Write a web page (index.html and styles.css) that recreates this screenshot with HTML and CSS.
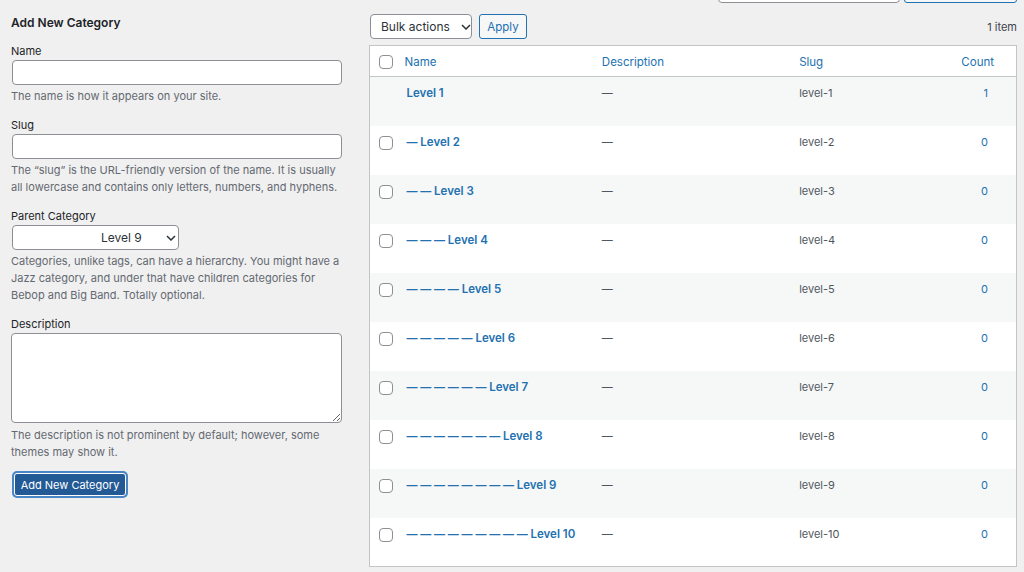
FILE: index.html
```html
<!DOCTYPE html>
<html lang="en">
<head>
    <meta charset="UTF-8">
    <meta name="viewport" content="width=device-width, initial-scale=1.0">
    <title>Categories</title>
    <link rel="stylesheet" href="styles.css">
</head>
<body>
    <div class="wrap">
        <!-- Left column: add form -->
        <div class="col-left">
            <h2>Add New Category</h2>

            <div class="field">
                <label for="tag-name">Name</label>
                <input type="text" id="tag-name" class="text-input">
                <p class="hint">The name is how it appears on your site.</p>
            </div>

            <div class="field">
                <label for="tag-slug">Slug</label>
                <input type="text" id="tag-slug" class="text-input">
                <p class="hint">The “slug” is the URL-friendly version of the name. It is usually all lowercase and contains only letters, numbers, and hyphens.</p>
            </div>

            <div class="field">
                <label>Parent Category</label>
                <div class="fake-select parent-select">
                    <span>Level 9</span>
                    <svg class="chevron" width="10" height="6" viewBox="0 0 10 6"><path d="M1 1l4 4 4-4" fill="none" stroke="#2c3338" stroke-width="1.5"/></svg>
                </div>
                <p class="hint">Categories, unlike tags, can have a hierarchy. You might have a Jazz category, and under that have children categories for Bebop and Big Band. Totally optional.</p>
            </div>

            <div class="field">
                <label for="tag-description">Description</label>
                <textarea id="tag-description" class="text-area"></textarea>
                <p class="hint">The description is not prominent by default; however, some themes may show it.</p>
            </div>

            <button class="btn-primary">Add New Category</button>
        </div>

        <!-- Right column: list table -->
        <div class="col-right">
            <div class="search-box">
                <div class="search-input"></div>
                <div class="search-btn"></div>
            </div>

            <div class="tablenav">
                <div class="fake-select bulk-select">
                    <span>Bulk actions</span>
                    <svg class="chevron" width="10" height="6" viewBox="0 0 10 6"><path d="M1 1l4 4 4-4" fill="none" stroke="#2c3338" stroke-width="1.5"/></svg>
                </div>
                <button class="btn-secondary">Apply</button>
                <span class="num-items">1 item</span>
            </div>

            <table class="list-table">
                <colgroup>
                    <col class="c-check">
                    <col class="c-name">
                    <col class="c-desc">
                    <col class="c-slug">
                    <col class="c-count">
                </colgroup>
                <thead>
                    <tr>
                        <th class="check"><span class="cb"></span></th>
                        <th>Name</th>
                        <th>Description</th>
                        <th>Slug</th>
                        <th class="count">Count</th>
                    </tr>
                </thead>
                <tbody>
                    <tr>
                        <td class="check"></td>
                        <td class="name">Level 1</td>
                        <td class="desc">—</td>
                        <td class="slug">level-1</td>
                        <td class="count">1</td>
                    </tr>
                    <tr>
                        <td class="check"><span class="cb"></span></td>
                        <td class="name"><span class="dash">— </span>Level 2</td>
                        <td class="desc">—</td>
                        <td class="slug">level-2</td>
                        <td class="count">0</td>
                    </tr>
                    <tr>
                        <td class="check"><span class="cb"></span></td>
                        <td class="name"><span class="dash">— — </span>Level 3</td>
                        <td class="desc">—</td>
                        <td class="slug">level-3</td>
                        <td class="count">0</td>
                    </tr>
                    <tr>
                        <td class="check"><span class="cb"></span></td>
                        <td class="name"><span class="dash">— — — </span>Level 4</td>
                        <td class="desc">—</td>
                        <td class="slug">level-4</td>
                        <td class="count">0</td>
                    </tr>
                    <tr>
                        <td class="check"><span class="cb"></span></td>
                        <td class="name"><span class="dash">— — — — </span>Level 5</td>
                        <td class="desc">—</td>
                        <td class="slug">level-5</td>
                        <td class="count">0</td>
                    </tr>
                    <tr>
                        <td class="check"><span class="cb"></span></td>
                        <td class="name"><span class="dash">— — — — — </span>Level 6</td>
                        <td class="desc">—</td>
                        <td class="slug">level-6</td>
                        <td class="count">0</td>
                    </tr>
                    <tr>
                        <td class="check"><span class="cb"></span></td>
                        <td class="name"><span class="dash">— — — — — — </span>Level 7</td>
                        <td class="desc">—</td>
                        <td class="slug">level-7</td>
                        <td class="count">0</td>
                    </tr>
                    <tr>
                        <td class="check"><span class="cb"></span></td>
                        <td class="name"><span class="dash">— — — — — — — </span>Level 8</td>
                        <td class="desc">—</td>
                        <td class="slug">level-8</td>
                        <td class="count">0</td>
                    </tr>
                    <tr>
                        <td class="check"><span class="cb"></span></td>
                        <td class="name"><span class="dash">— — — — — — — — </span>Level 9</td>
                        <td class="desc">—</td>
                        <td class="slug">level-9</td>
                        <td class="count">0</td>
                    </tr>
                    <tr>
                        <td class="check"><span class="cb"></span></td>
                        <td class="name"><span class="dash">— — — — — — — — — </span>Level 10</td>
                        <td class="desc">—</td>
                        <td class="slug">level-10</td>
                        <td class="count">0</td>
                    </tr>
                </tbody>
            </table>
        </div>
    </div>
</body>
</html>
```

FILE: styles.css
```css
body {
    margin: 0;
    background-color: #f0f0f1;
    font-family: Inter, "Liberation Sans", sans-serif;
    font-size: 11px;
    color: #3c434a;
    overflow: hidden;
}
.wrap {
    display: flex;
    padding: 0 7px 0 11px;
}
.col-left {
    flex: none;
    width: 331px;
    padding-top: 14px;
}
.col-right {
    flex: 1;
    margin-left: 27px;
}

/* form */
h2 {
    margin: 0 0 12px;
    font-size: 12px;
    font-weight: 600;
    line-height: 17px;
    color: #1d2327;
}
.field {
    margin-bottom: 12px;
}
label {
    display: block;
    line-height: 17px;
    color: #1d2327;
}
.text-input {
    display: block;
    box-sizing: border-box;
    width: 330px;
    height: 25px;
    margin: 0 0 3px 1px;
    border: 1px solid #8c8f94;
    border-radius: 4px;
    background: #fff;
}
.text-area {
    display: block;
    box-sizing: border-box;
    width: 331px;
    height: 90px;
    margin: 0 0 4px;
    border: 1px solid #8c8f94;
    border-radius: 4px;
    background: #fff;
}
.hint {
    margin: 0;
    line-height: 17px;
    color: #646970;
}
.fake-select {
    display: flex;
    align-items: center;
    box-sizing: border-box;
    height: 25px;
    border: 1px solid #8c8f94;
    border-radius: 4px;
    background: #fff;
    color: #2c3338;
}
.parent-select {
    width: 167px;
    margin: 0 0 3px 1px;
    padding-left: 88px;
    font-size: 12px;
}
.parent-select .chevron {
    margin-left: 24px;
}
.btn-primary {
    display: block;
    box-sizing: border-box;
    width: 112px;
    height: 23px;
    margin: 8px 0 0 3px;
    padding: 0;
    border: 1px solid #fff;
    border-radius: 3px;
    background-color: #235a95;
    box-shadow: 0 0 0 2px #4a86c5;
    color: #fff;
    font-family: inherit;
    font-size: 11px;
    cursor: pointer;
}

/* right side */
.search-box {
    display: flex;
    justify-content: flex-end;
    gap: 4px;
    height: 30px;
    margin-top: -27px;
}
.search-input {
    width: 180px;
    border: 1px solid #8c8f94;
    border-radius: 4px;
    background: #fff;
}
.search-btn {
    width: 111px;
    border: 1px solid #2271b1;
    border-radius: 3px;
    background: #f6f7f7;
}
.tablenav {
    display: flex;
    align-items: center;
    gap: 7px;
    height: 25px;
    margin: 11px 0 6px;
}
.bulk-select {
    width: 102px;
    margin-left: 1px;
    padding-left: 10px;
    font-size: 12px;
}
.bulk-select .chevron {
    margin-left: 11px;
}
.btn-secondary {
    box-sizing: border-box;
    width: 48px;
    height: 25px;
    padding: 0;
    border: 1px solid #2271b1;
    border-radius: 3px;
    background: #f6f7f7;
    color: #2271b1;
    font-family: inherit;
    font-size: 11.5px;
    cursor: pointer;
}
.num-items {
    margin-left: auto;
    color: #3c434a;
    font-size: 11px;
}

/* table */
.list-table {
    width: 100%;
    table-layout: fixed;
    border-collapse: collapse;
    border: 1px solid #c3c4c7;
    background: #fff;
}
.c-check { width: 25px; }
.c-name { width: 197px; }
.c-desc { width: 197px; }
.c-slug { width: 154px; }
.c-count { width: 73px; }
th {
    height: 31px;
    box-sizing: border-box;
    padding: 2px 10px 0;
    border-bottom: 1px solid #c3c4c7;
    text-align: left;
    font-weight: 400;
    font-size: 11.5px;
    color: #2271b1;
}
th.check {
    padding: 2px 0 0 9px;
}
th.count {
    text-align: right;
    padding-right: 22px;
}
td {
    height: 49px;
    box-sizing: border-box;
    padding: 7px 10px 0;
    vertical-align: top;
    line-height: 18px;
    color: #50575e;
}
tbody tr:nth-child(odd) {
    background: #f6f7f7;
}
td.check {
    padding: 10px 0 0 9px;
}
.cb {
    display: block;
    box-sizing: border-box;
    width: 14px;
    height: 14px;
    border: 1px solid #8c8f94;
    border-radius: 4px;
    background: #fff;
}
td.name {
    padding-left: 12px;
    font-size: 11.5px;
    font-weight: 600;
    color: #2271b1;
    white-space: nowrap;
}
.dash {
    font-size: 11px;
}
td.count {
    text-align: right;
    padding-right: 28px;
    color: #2271b1;
}
```
